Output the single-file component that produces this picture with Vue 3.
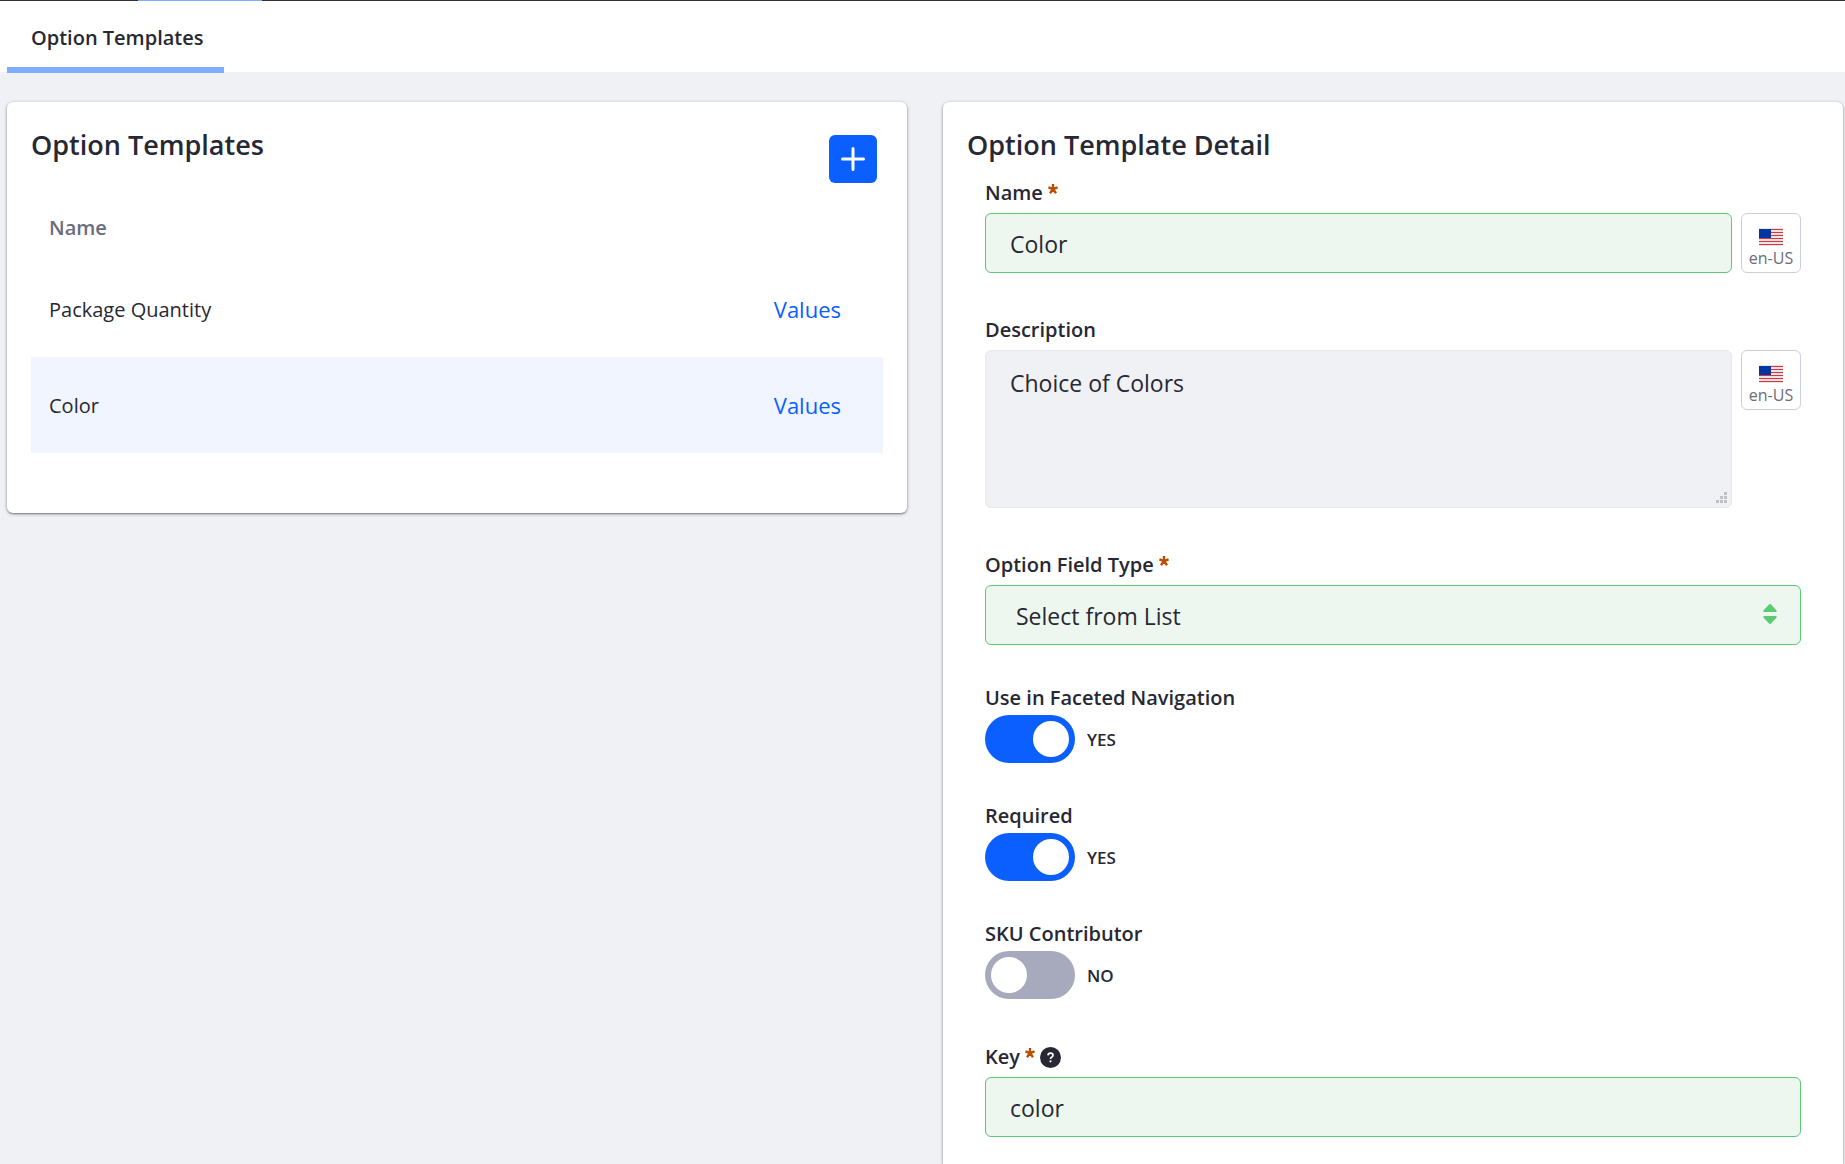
<script setup>
import { ref } from 'vue'

const templates = [
  { name: 'Package Quantity', active: false },
  { name: 'Color', active: true },
]

const name = ref('Color')
const description = ref('Choice of Colors')
const fieldType = ref('select')
const key = ref('color')

const toggles = ref([
  { id: 'faceted', label: 'Use in Faceted Navigation', on: true },
  { id: 'required', label: 'Required', on: true },
  { id: 'sku', label: 'SKU Contributor', on: false },
])
</script>

<template>
  <div class="page">
    <div class="topbar"><span class="topbar-active"></span></div>
    <nav class="tabs">
      <a class="tab" href="#">Option Templates</a>
    </nav>

    <main class="columns">
      <section class="card list-card">
        <header class="list-head">
          <h2 class="title">Option Templates</h2>
          <button class="add" type="button" aria-label="Add option template">
            <svg width="24" height="24" viewBox="0 0 24 24" aria-hidden="true">
              <path d="M12 1.5v21M1.5 12h21" stroke="#fff" stroke-width="3" stroke-linecap="round" />
            </svg>
          </button>
        </header>
        <table class="table">
          <thead>
            <tr><th scope="col">Name</th><td></td></tr>
          </thead>
          <tbody>
            <tr v-for="t in templates" :key="t.name" :class="{ active: t.active }">
              <td>{{ t.name }}</td>
              <td class="action"><a href="#">Values</a></td>
            </tr>
          </tbody>
        </table>
      </section>

      <section class="card detail-card">
        <h2 class="title">Option Template Detail</h2>
        <form class="form" @submit.prevent>
          <div class="field">
            <label class="label" for="name">Name
              <svg class="star" viewBox="0 0 10 10" aria-hidden="true"><path d="M5 5V0M5 5L.4 3.4M5 5l4.6-1.6M5 5L2 9.2M5 5l3 4.2" /></svg>
            </label>
            <div class="row">
              <input id="name" v-model="name" class="control valid" type="text" />
              <button class="locale" type="button">
                <svg width="24" height="18" viewBox="0 0 24 18" aria-hidden="true">
                  <path fill="#e8e4e6" d="M0 0h24v18H0z" />
                  <path stroke="#e0323a" stroke-width="1" d="M0 1.5h24M0 4.5h24M0 7.5h24M0 10.5h24M0 13.5h24M0 16.5h24" />
                  <path fill="#0036a0" d="M0 1h12v9H0z" />
                </svg>
                <span>en-US</span>
              </button>
            </div>
          </div>

          <div class="field">
            <label class="label" for="description">Description</label>
            <div class="row">
              <div class="area">
                <textarea id="description" v-model="description" class="control"></textarea>
                <svg class="grip" width="12" height="12" viewBox="0 0 12 12" aria-hidden="true">
                  <path fill="#c1c1c3" d="M8 0h3v3H8zM4 4h3v3H4zM8 4h3v3H8zM0 8h3v3H0zM4 8h3v3H4zM8 8h3v3H8z" />
                </svg>
              </div>
              <button class="locale" type="button">
                <svg width="24" height="18" viewBox="0 0 24 18" aria-hidden="true">
                  <path fill="#e8e4e6" d="M0 0h24v18H0z" />
                  <path stroke="#e0323a" stroke-width="1" d="M0 1.5h24M0 4.5h24M0 7.5h24M0 10.5h24M0 13.5h24M0 16.5h24" />
                  <path fill="#0036a0" d="M0 1h12v9H0z" />
                </svg>
                <span>en-US</span>
              </button>
            </div>
          </div>

          <div class="field">
            <label class="label" for="type">Option Field Type
              <svg class="star" viewBox="0 0 10 10" aria-hidden="true"><path d="M5 5V0M5 5L.4 3.4M5 5l4.6-1.6M5 5L2 9.2M5 5l3 4.2" /></svg>
            </label>
            <div class="select">
              <select id="type" v-model="fieldType" class="control valid">
                <option value="select">Select from List</option>
              </select>
              <svg class="arrows" width="14" height="20" viewBox="0 0 14 20" aria-hidden="true">
                <path fill="#5aca75" d="M6 .5q1-1 2 0L13.600 6.500q.5 1.300-.8 1.500H1.200Q-.1 7.800.4 6.500zM6 19.500q1 1 2 0l5.600-6q.5-1.300-.8-1.500H1.200Q-.1 12.200.4 13.500z" />
              </svg>
            </div>
          </div>

          <div v-for="t in toggles" :key="t.id" class="toggle-field">
            <label class="label" :for="t.id">{{ t.label }}</label>
            <div class="toggle-row">
              <input :id="t.id" v-model="t.on" class="toggle" type="checkbox" role="switch" />
              <span class="state">{{ t.on ? 'YES' : 'NO' }}</span>
            </div>
          </div>

          <div class="field">
            <label class="label" for="key">Key
              <svg class="star" viewBox="0 0 10 10" aria-hidden="true"><path d="M5 5V0M5 5L.4 3.4M5 5l4.6-1.6M5 5L2 9.2M5 5l3 4.2" /></svg>
              <svg class="help" width="21" height="21" viewBox="0 0 21 21" aria-hidden="true">
                <circle cx="10.500" cy="10.500" r="10.500" fill="#272833" />
                <path d="M8 8.400Q8.100 6.200 10.500 6.200T13 8.200Q13 9.500 11.600 10.300 10.500 10.900 10.500 12" fill="none" stroke="#fff" stroke-width="1.700" />
                <circle cx="10.500" cy="14.300" r="1.100" fill="#fff" />
              </svg>
            </label>
            <input id="key" v-model="key" class="control valid" type="text" />
          </div>
        </form>
      </section>
    </main>
  </div>
</template>

<style>
body {
  margin: 0;
  background: #f0f1f5;
}
</style>

<style scoped>
* {
  box-sizing: border-box;
}
.page {
  display: flex;
  flex-direction: column;
  min-height: 100vh;
  background: #f0f1f5;
  color: #272833;
  font-family: "Open Sans", "Noto Sans", sans-serif;
  font-size: 22px;
}
.topbar {
  height: 1px;
  padding-left: 138px;
  background: #30313f;
}
.topbar-active {
  display: block;
  width: 124px;
  height: 1px;
  background: #80acff;
}
.tabs {
  display: flex;
  height: 71px;
  padding-left: 7px;
  background: #fff;
}
.tab {
  height: 72px;
  padding: 0 20px 0 24px;
  border-bottom: 6px solid #80acff;
  color: #272833;
  font-size: 20px;
  font-weight: 600;
  line-height: 73px;
  text-decoration: none;
}
.columns {
  display: flex;
  flex: 1;
  gap: 36px;
  padding: 30px 2px 0 7px;
}
.card {
  flex: 1;
  min-width: 0;
  background: #fff;
  border-radius: 6px;
  box-shadow: 0 1px 5px -1px rgba(0, 0, 0, 0.3), 0 1px 2px rgba(0, 0, 0, 0.4);
}
.list-card {
  align-self: flex-start;
  padding: 24px 24px 60px;
}
.detail-card {
  padding: 24px 24px 26px;
  border-radius: 6px 6px 0 0;
}
.title {
  margin: 0;
  font-size: 27px;
  font-weight: 600;
  line-height: 38px;
}
.list-head {
  display: flex;
  justify-content: space-between;
  height: 69px;
  padding-right: 6px;
}
.add {
  display: flex;
  align-items: center;
  justify-content: center;
  width: 48px;
  height: 48px;
  margin-top: 9px;
  padding: 0;
  border: 0;
  border-radius: 6px;
  background: #0b5fff;
}
.table {
  width: 100%;
  border-collapse: collapse;
  font-size: 20px;
  text-align: left;
}
.table th,
.table td {
  height: 96px;
  padding: 0 18px;
}
.table thead th,
.table thead td {
  height: 66px;
  padding-bottom: 2px;
  color: #6b6c7e;
  font-weight: 600;
}
.table .action {
  padding-right: 42px;
  font-size: 22px;
  text-align: right;
}
.action a {
  color: #0b5fff;
  text-decoration: none;
}
.active {
  background: #f0f5ff;
}
.form {
  display: flex;
  flex-direction: column;
  padding: 14px 18px 0;
}
.field {
  display: flex;
  flex-direction: column;
  gap: 5px;
}
.field + .field {
  margin-top: 42px;
}
.toggle-field + .field {
  margin-top: 43px;
}
.label {
  display: flex;
  align-items: center;
  align-self: flex-start;
  gap: 5px;
  height: 30px;
  font-size: 20px;
  font-weight: 600;
  line-height: 30px;
}
.star {
  width: 10px;
  height: 10px;
  margin-bottom: 8px;
  fill: none;
  stroke: #b95000;
  stroke-width: 2.4;
}
.row {
  display: flex;
  align-items: flex-start;
  gap: 9px;
}
.control {
  display: block;
  width: 100%;
  height: 60px;
  margin: 0;
  padding: 2px 24px 0;
  border: 1px solid #e7e7ed;
  border-radius: 6px;
  outline: 0;
  background: #f0f1f5;
  color: #272833;
  font-family: inherit;
  font-size: 23px;
}
.valid {
  border-color: #5aca75;
  background: #edf7ef;
}
.area,
.select {
  position: relative;
  flex: 1;
}
textarea.control {
  height: 158px;
  padding-top: 16px;
  line-height: 32px;
  resize: none;
}
.grip {
  position: absolute;
  right: 4px;
  bottom: 4px;
}
select.control {
  padding-left: 30px;
  appearance: none;
}
.arrows {
  position: absolute;
  top: 19px;
  right: 24px;
  pointer-events: none;
}
.locale {
  display: flex;
  flex: none;
  flex-direction: column;
  align-items: center;
  width: 60px;
  height: 60px;
  padding: 14px 0 0;
  border: 1px solid #cdced9;
  border-radius: 6px;
  background: #fff;
  color: #6b6c7e;
  font-family: inherit;
  font-size: 16px;
  line-height: 24px;
}
.toggle-field {
  display: flex;
  flex-direction: column;
  gap: 2px;
  margin-top: 38px;
}
.toggle-row {
  display: flex;
  align-items: center;
  gap: 12px;
}
.toggle {
  display: flex;
  width: 90px;
  height: 48px;
  margin: 0;
  padding: 6px;
  border-radius: 24px;
  background: #a7a9bc;
  appearance: none;
}
.toggle::before {
  width: 36px;
  height: 36px;
  border-radius: 50%;
  background: #fff;
  content: "";
}
.toggle:checked {
  justify-content: flex-end;
  background: #0b5fff;
}
.state {
  font-size: 17px;
  font-weight: 600;
}
</style>
